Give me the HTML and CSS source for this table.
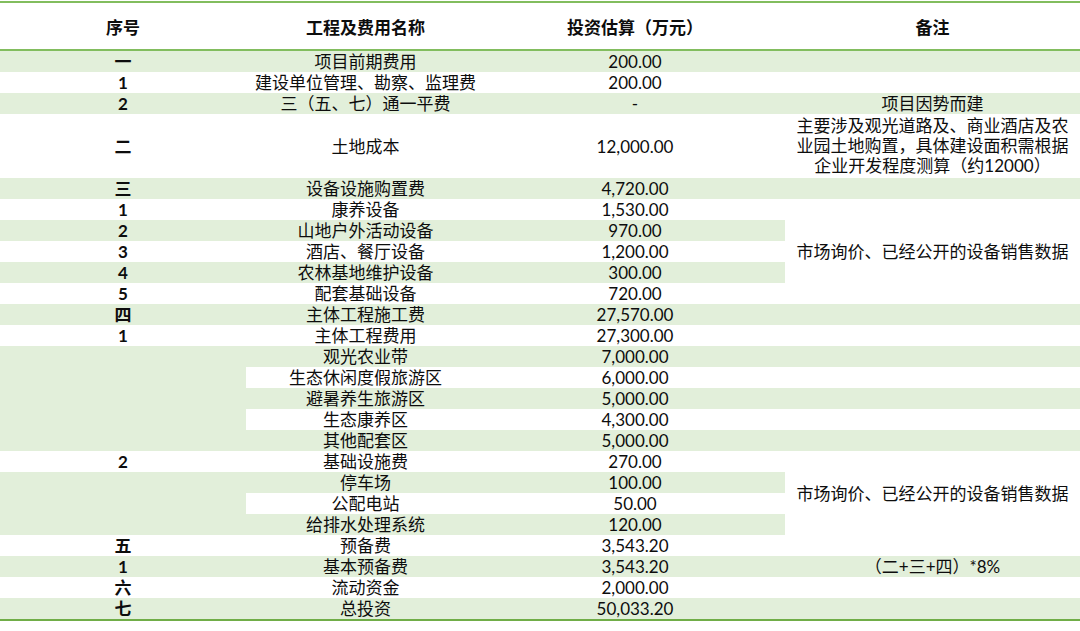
FILE: index.html
```html
<!DOCTYPE html>
<html lang="zh-CN">
<head>
<meta charset="utf-8">
<title>投资估算表</title>
<link rel="stylesheet" href="styles.css">
</head>
<body>
<table class="invest">
  <colgroup>
    <col class="c1"><col class="c2"><col class="c3"><col class="c4">
  </colgroup>
  <thead>
    <tr class="head">
      <th>序号</th><th>工程及费用名称</th><th>投资估算（万元）</th><th>备注</th>
    </tr>
  </thead>
  <tbody>
    <tr class="g"><td class="no">一</td><td>项目前期费用</td><td class="num">200.00</td><td></td></tr>
    <tr><td class="no">1</td><td>建设单位管理、勘察、监理费</td><td class="num">200.00</td><td></td></tr>
    <tr class="g"><td class="no">2</td><td>三（五、七）通一平费</td><td class="num">-</td><td>项目因势而建</td></tr>
    <tr class="tall"><td class="no">二</td><td>土地成本</td><td class="num">12,000.00</td><td class="multi">主要涉及观光道路及、商业酒店及农<br>业园土地购置，具体建设面积需根据<br>企业开发程度测算（约12000）</td></tr>
    <tr class="g"><td class="no">三</td><td>设备设施购置费</td><td class="num">4,720.00</td><td></td></tr>
    <tr><td class="no">1</td><td>康养设备</td><td class="num">1,530.00</td><td rowspan="5" class="white">市场询价、已经公开的设备销售数据</td></tr>
    <tr class="g"><td class="no">2</td><td>山地户外活动设备</td><td class="num">970.00</td></tr>
    <tr><td class="no">3</td><td>酒店、餐厅设备</td><td class="num">1,200.00</td></tr>
    <tr class="g"><td class="no">4</td><td>农林基地维护设备</td><td class="num">300.00</td></tr>
    <tr><td class="no">5</td><td>配套基础设备</td><td class="num">720.00</td></tr>
    <tr class="g"><td class="no">四</td><td>主体工程施工费</td><td class="num">27,570.00</td><td></td></tr>
    <tr><td class="no">1</td><td>主体工程费用</td><td class="num">27,300.00</td><td></td></tr>
    <tr class="g"><td rowspan="5" class="green"></td><td>观光农业带</td><td class="num">7,000.00</td><td></td></tr>
    <tr><td>生态休闲度假旅游区</td><td class="num">6,000.00</td><td></td></tr>
    <tr class="g"><td>避暑养生旅游区</td><td class="num">5,000.00</td><td></td></tr>
    <tr><td>生态康养区</td><td class="num">4,300.00</td><td></td></tr>
    <tr class="g"><td>其他配套区</td><td class="num">5,000.00</td><td></td></tr>
    <tr><td class="no">2</td><td>基础设施费</td><td class="num">270.00</td><td rowspan="4" class="white">市场询价、已经公开的设备销售数据</td></tr>
    <tr class="g"><td rowspan="3" class="green"></td><td>停车场</td><td class="num">100.00</td></tr>
    <tr><td>公配电站</td><td class="num">50.00</td></tr>
    <tr class="g"><td>给排水处理系统</td><td class="num">120.00</td></tr>
    <tr><td class="no">五</td><td>预备费</td><td class="num">3,543.20</td><td></td></tr>
    <tr class="g"><td class="no">1</td><td>基本预备费</td><td class="num">3,543.20</td><td>（二+三+四）*8%</td></tr>
    <tr><td class="no">六</td><td>流动资金</td><td class="num">2,000.00</td><td></td></tr>
    <tr class="g last"><td class="no">七</td><td>总投资</td><td class="num">50,033.20</td><td></td></tr>
  </tbody>
</table>
</body>
</html>
```

FILE: styles.css
```css
html, body {
  margin: 0;
  padding: 0;
  background: #ffffff;
}

body {
  padding-top: 1px;
  font-family: Lato, "Noto Sans CJK SC", sans-serif;
  color: #0d0d0d;
}

.invest {
  width: 1080px;
  table-layout: fixed;
  border-collapse: collapse;
  border-spacing: 0;
  font-size: 17px;
}

.c1 { width: 246px; }
.c2 { width: 239px; }
.c3 { width: 300px; }
.c4 { width: 295px; }

.invest th,
.invest td {
  padding: 0;
  text-align: center;
  vertical-align: middle;
  white-space: nowrap;
}

.head th {
  height: 46px;
  font-family: "Noto Sans CJK SC", sans-serif;
  font-weight: 700;
  font-size: 17px;
  border-top: 2px solid #82bd5e;
  border-bottom: 2px solid #82bd5e;
}

.invest td {
  height: 21px;
  line-height: 21px;
}

.invest tr.tall td {
  height: 64px;
}

.invest td.multi {
  line-height: 20px;
}

.g td {
  background: #e2efda;
}

.invest td.green {
  background: #e2efda;
}

.invest td.white {
  background: #ffffff;
}

.no {
  font-weight: 700;
}

.last td {
  border-bottom: 2px solid #70ad47;
}
```
